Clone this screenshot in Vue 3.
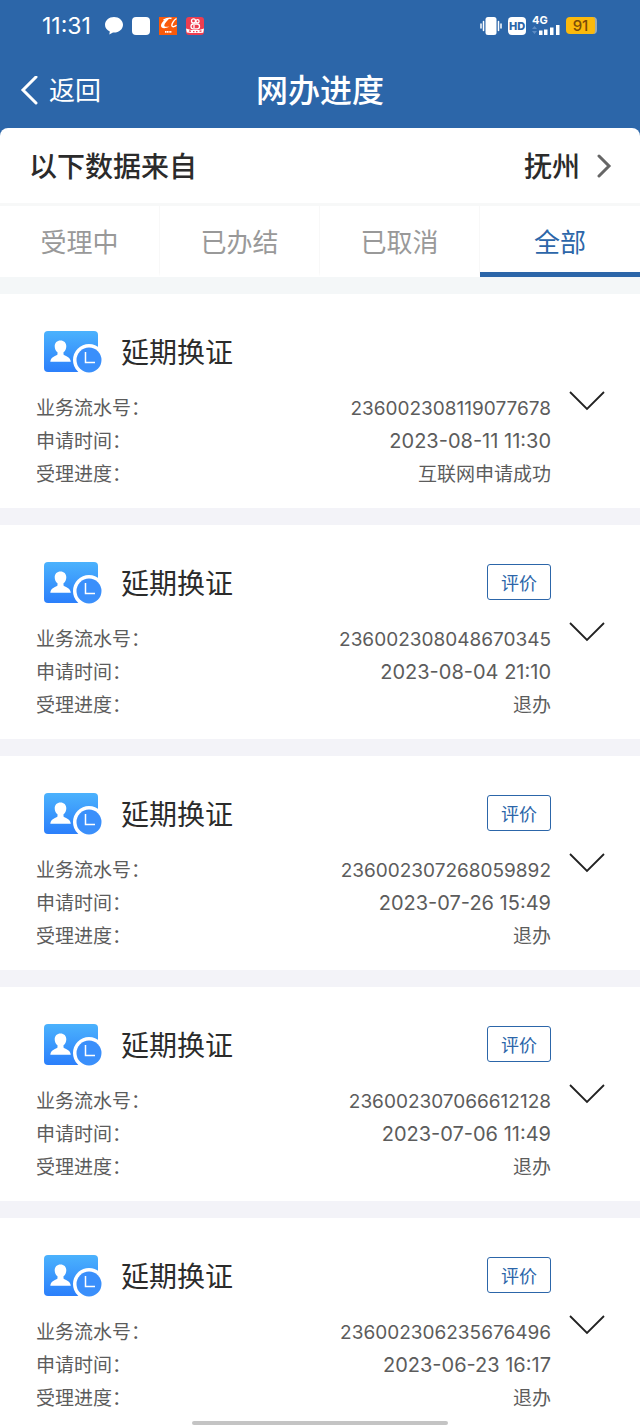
<template>
    <div class="progress-page">
        <header class="page-header">
            <div class="status-bar">
                <div class="status-left">
                    <time class="status-time">11:31</time>
                    <svg class="status-app" viewBox="0 0 18 18" aria-hidden="true">
                        <path d="M9 0C4 0 0 3.400 0 7.800c0 3 1.900 5.500 4.800 6.800L4.300 17.500 8 15.600h1c5 0 9-3.400 9-7.800S14 0 9 0z" fill="#fff" />
                    </svg>
                    <svg class="status-app" viewBox="0 0 18 18" aria-hidden="true">
                        <rect width="18" height="18" rx="4" fill="#fff" />
                    </svg>
                    <svg class="status-app" viewBox="0 0 18 18" aria-hidden="true">
                        <rect width="18" height="18" fill="#fa5a0a" />
                        <path d="M11 1C6.500 1.500 2 5.500 2 8.800c0 3 4.500 3 8.500.7-3 .7-5.500.5-5.200-1.300C5.600 6 8.500 3.500 11 1z" fill="#fff" />
                        <path d="M4.500 3.200c3-1.800 6.500-2.300 8-1.700M17.500 1.500c-3 2-5.200 5.800-4.500 7.500.5 1.200 2.800.8 4.500-.8" fill="none" stroke="#fff" stroke-width="1.400" />
                        <path d="M6 14.800h6.500" stroke="#fff" stroke-width="1.800" stroke-dasharray="1.300 .4" />
                    </svg>
                    <svg class="status-app" viewBox="0 0 18 18" aria-hidden="true">
                        <rect width="18" height="18" rx="3" fill="#ee3d50" />
                        <g fill="none" stroke="#fff" stroke-width="1.300">
                            <circle cx="7.500" cy="3.900" r="2" />
                            <circle cx="11.500" cy="4.300" r="1.600" />
                            <rect x="5" y="7" width="8.500" height="4.800" rx="2.300" />
                            <path d="M8 8v3" />
                        </g>
                        <path d="M0 11.500l5 1.500h8l5-1.500-.8 4.300L13 16H5l-4.200-.6z" fill="#fff" />
                        <path d="M3 13.800l2 .6M7 14.600h1.500M10 14.600h1.500M13.500 14.400l2-.6" stroke="#ee3d50" stroke-width="1.400" />
                    </svg>
                </div>
                <div class="status-right">
                    <svg class="status-vibrate" viewBox="0 0 22 18" aria-hidden="true">
                        <rect x="5.500" y="0" width="11" height="18" rx="2.500" fill="#fff" />
                        <path d="M3.500 4.500v9M1 7v4M18.500 4.500v9M21 7v4" stroke="#fff" stroke-width="1.500" stroke-linecap="round" />
                    </svg>
                    <span class="status-hd">HD</span>
                    <span class="status-signal">
                        <span class="signal-type">4G</span>
                        <svg class="signal-bars" viewBox="0 0 28 10" aria-hidden="true">
                            <path d="M0 4l2.500-3L5 4zM0 6l2.500 3L5 6z" fill="#5d8cc4" />
                            <path d="M7 5.500h3.500V10H7zM12 4.500h3.500V10H12zM18 2.500h3.500V10H18zM24 0h3.500v10H24z" fill="#fff" />
                        </svg>
                    </span>
                    <span class="status-battery">91</span>
                </div>
            </div>
            <nav class="nav-bar">
                <button type="button" class="nav-back">
                    <svg class="back-icon" viewBox="0 0 18 30" aria-hidden="true">
                        <path d="M16 1L3 14l13 13" fill="none" stroke="#fff" stroke-width="3" stroke-linecap="round" />
                    </svg>
                    <span>返回</span>
                </button>
                <h1 class="nav-title">网办进度</h1>
            </nav>
        </header>

        <section class="source-row">
            <span>以下数据来自</span>
            <button type="button" class="source-city">
                <span>抚州</span>
                <svg class="city-icon" viewBox="0 0 16 26" aria-hidden="true">
                    <path d="M3 2l10 10L3 22" fill="none" stroke="#666" stroke-width="3" stroke-linecap="round" />
                </svg>
            </button>
        </section>

        <div class="tabs" role="tablist">
            <button
                v-for="tab in tabs"
                :key="tab"
                type="button"
                role="tab"
                class="tab"
                :class="{ active: tab === activeTab }"
                :aria-selected="tab === activeTab"
                @click="activeTab = tab"
            >
                {{ tab }}
            </button>
        </div>

        <main class="record-list">
            <article v-for="record in visibleRecords" :key="record.serial" class="record">
                <div class="record-body">
                    <div class="record-head">
                        <svg class="record-icon" viewBox="0 0 58 42" aria-hidden="true">
                            <defs>
                                <linearGradient :id="`card-${record.serial}`" x1="0" y1="0" x2="0" y2="1">
                                    <stop offset="0" stop-color="#4bb2fd" />
                                    <stop offset="1" stop-color="#2b7ffb" />
                                </linearGradient>
                            </defs>
                            <rect width="54" height="41" rx="4" :fill="`url(#card-${record.serial})`" />
                            <path d="M16.500 9.500c-3.500 0-5.800 2.300-5.800 5.800 0 2.600 1 4.700 2.800 6v2.200c-1 1.500-6.800 2-7.200 7.200h20.500c-.4-5.200-6.300-5.700-7.300-7.200v-2.200c1.800-1.300 2.800-3.400 2.800-6 0-3.500-2.300-5.800-5.800-5.800z" fill="#fff" />
                            <circle cx="45" cy="29" r="16" fill="#fff" />
                            <circle cx="45" cy="29" r="12.500" fill="#3a8ffb" />
                            <path d="M41.500 21v10.500H51" fill="none" stroke="#fff" stroke-width="1.500" />
                        </svg>
                        <h2 class="record-title">{{ record.title }}</h2>
                        <button v-if="record.canReview" type="button" class="review-button">评价</button>
                    </div>
                    <dl class="record-fields">
                        <div class="field">
                            <dt>业务流水号：</dt>
                            <dd>{{ record.serial }}</dd>
                        </div>
                        <div class="field">
                            <dt>申请时间：</dt>
                            <dd class="field-time">{{ record.appliedAt }}</dd>
                        </div>
                        <div class="field">
                            <dt>受理进度：</dt>
                            <dd>{{ record.status }}</dd>
                        </div>
                    </dl>
                </div>
                <button type="button" class="expand-button" aria-label="展开">
                    <svg viewBox="0 0 36 20" aria-hidden="true">
                        <path d="M1 1l17 17L35 1" fill="none" stroke="#222" stroke-width="1.800" />
                    </svg>
                </button>
            </article>
        </main>

        <div class="home-indicator"></div>
    </div>
</template>

<script setup>
import { computed, ref } from 'vue'

const tabs = ['受理中', '已办结', '已取消', '全部']
const activeTab = ref('全部')

const records = [
    { title: '延期换证', serial: '236002308119077678', appliedAt: '2023-08-11 11:30', status: '互联网申请成功', group: '受理中', canReview: false },
    { title: '延期换证', serial: '236002308048670345', appliedAt: '2023-08-04 21:10', status: '退办', group: '已办结', canReview: true },
    { title: '延期换证', serial: '236002307268059892', appliedAt: '2023-07-26 15:49', status: '退办', group: '已办结', canReview: true },
    { title: '延期换证', serial: '236002307066612128', appliedAt: '2023-07-06 11:49', status: '退办', group: '已办结', canReview: true },
    { title: '延期换证', serial: '236002306235676496', appliedAt: '2023-06-23 16:17', status: '退办', group: '已办结', canReview: true },
]

const visibleRecords = computed(() => {
    if (activeTab.value === '全部') return records
    return records.filter((record) => record.group === activeTab.value)
})
</script>

<style>
body {
    margin: 0;
    background: #f3f3f8;
}
</style>

<style scoped>
.progress-page {
    display: flex;
    flex-direction: column;
    height: 100vh;
    overflow: hidden;
    color: #2b2b2b;
    background: #f3f3f8;
    font-family: Inter, "Noto Sans CJK SC", sans-serif;
}

button {
    padding: 0;
    color: inherit;
    background: none;
    border: 0;
    font: inherit;
    cursor: pointer;
}

svg {
    display: block;
    flex: none;
}

.page-header {
    flex: none;
    height: 136px;
    margin-bottom: -8px;
    color: #fff;
    background: #2c66a9;
}

.status-bar {
    display: flex;
    align-items: center;
    justify-content: space-between;
    height: 51px;
    padding: 0 43px 0 42px;
}

.status-left,
.status-right {
    display: flex;
    align-items: center;
}

.status-left {
    gap: 9px;
}

.status-right {
    gap: 6px;
}

.status-time {
    margin-right: 5px;
    font-size: 23px;
}

.status-app {
    width: 18px;
    height: 18px;
}

.status-vibrate {
    width: 22px;
    height: 18px;
}

.status-hd {
    width: 18px;
    color: #2c66a9;
    background: #fff;
    border-radius: 4px;
    font-size: 11px;
    font-weight: 800;
    line-height: 18px;
    text-align: center;
}

.status-signal {
    display: flex;
    flex-direction: column;
    width: 28px;
}

.signal-type {
    font-size: 11px;
    font-weight: 700;
    line-height: 9px;
}

.signal-bars {
    width: 28px;
    height: 10px;
}

.status-battery {
    width: 29px;
    color: #7a4a08;
    background: #fbb90c;
    border-right: 2px solid #9aabb4;
    border-radius: 4px;
    font-size: 15px;
    font-weight: 500;
    line-height: 17px;
    text-align: center;
}

.nav-bar {
    display: grid;
    grid-template-columns: 1fr auto 1fr;
    align-items: center;
    height: 80px;
    padding: 0 20px;
}

.nav-back {
    display: flex;
    align-items: center;
    justify-self: start;
    gap: 11px;
    font-size: 26px;
    line-height: 36px;
}

.back-icon {
    width: 18px;
    height: 30px;
}

.nav-title {
    margin: 0;
    font-size: 32px;
    font-weight: 500;
    line-height: 44px;
}

.source-row {
    display: flex;
    flex: none;
    box-sizing: border-box;
    align-items: center;
    justify-content: space-between;
    height: 78px;
    padding: 2px 28px 0 29px;
    background: #fff;
    border-bottom: 3px solid #f7f8f8;
    border-radius: 8px 8px 0 0;
    font-size: 28px;
    font-weight: 500;
    line-height: 40px;
}

.source-city {
    display: flex;
    align-items: center;
    gap: 16px;
}

.city-icon {
    width: 16px;
    height: 26px;
}

.tabs {
    display: flex;
    flex: none;
    height: 71px;
    margin-bottom: 17px;
    background: #fff;
    box-shadow: 0 17px 0 #f4f7f8;
}

.tab {
    box-sizing: border-box;
    width: 25%;
    padding-top: 8px;
    color: #999;
    border-right: 1px solid #f8f8f8;
    border-bottom: 5px solid transparent;
    font-size: 26px;
    line-height: 36px;
}

.tab.active {
    color: #2c66a9;
    border-right: 0;
    border-bottom-color: #2c66a9;
}

.record-list {
    display: flex;
    flex: 1;
    flex-direction: column;
    gap: 17px;
    min-height: 0;
    overflow-y: auto;
    scrollbar-width: none;
}

.record {
    display: flex;
    flex: none;
    align-items: center;
    gap: 18px;
    padding: 36px 35px 17px 36px;
    background: #fff;
}

.record-body {
    flex: 1;
}

.record-head {
    display: flex;
    align-items: center;
    height: 44px;
    margin-bottom: 18px;
    padding-left: 8px;
}

.record-icon {
    width: 58px;
    height: 42px;
}

.record-title {
    margin: 0 auto 0 19px;
    padding-top: 2px;
    font-size: 28px;
    font-weight: 400;
    line-height: 40px;
}

.review-button {
    box-sizing: border-box;
    width: 64px;
    height: 36px;
    margin-bottom: 2px;
    color: #2c66a9;
    border: 1px solid #2c66a9;
    border-radius: 3px;
    font-size: 18px;
}

.record-fields {
    margin: 0;
    color: #5c5c5c;
    font-size: 19px;
    line-height: 33px;
}

.field {
    display: flex;
    justify-content: space-between;
}

.field dd {
    margin: 0;
}

.field .field-time {
    font-size: 20px;
}

.expand-button {
    margin-bottom: 20px;
}

.expand-button svg {
    width: 36px;
    height: 20px;
}

.home-indicator {
    position: fixed;
    bottom: 2px;
    left: 30%;
    width: 40%;
    height: 4px;
    background: #c4c4c4;
    border-radius: 2px;
}
</style>
